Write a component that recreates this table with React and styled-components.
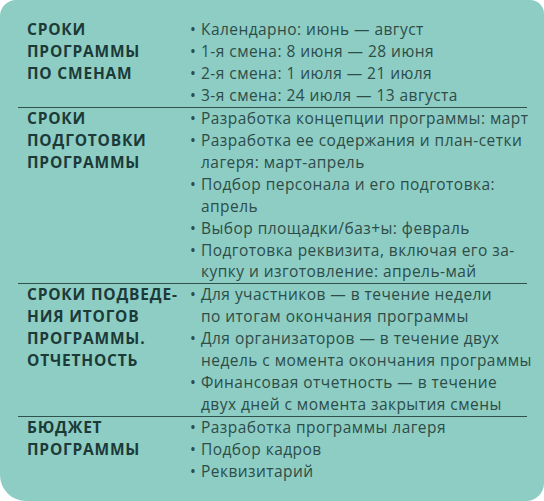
import React from "react";
import styled, { createGlobalStyle } from "styled-components";

const GlobalStyle = createGlobalStyle`
  html, body {
    margin: 0;
    padding: 0;
    background: #ffffff;
  }
`;

const StyledCard = styled.section`
  box-sizing: border-box;
  width: 544px;
  height: 501px;
  background: #8dcdc4;
  border-radius: 16px 14px 18px 26px;
  padding: 19px 17px 0 18px;
  font-family: "Open Sans", "Liberation Sans", sans-serif;
  color: #2e4c48;
`;

const StyledRow = styled.div`
  display: grid;
  grid-template-columns: 172px 1fr;
  border-bottom: ${({ $last }) => ($last ? "none" : "1.5px solid #2f524d")};
`;

const StyledHeading = styled.h3`
  margin: 0;
  padding-left: 9px;
  font-size: 15.5px;
  line-height: 21.95px;
  font-weight: 700;
  letter-spacing: 0.8px;
  text-transform: uppercase;
  color: #1c3a37;
  white-space: nowrap;
`;

const StyledList = styled.ul`
  margin: 0;
  padding: 0;
  list-style: none;
`;

const StyledItem = styled.li`
  font-size: 15.5px;
  line-height: 21.95px;
  letter-spacing: 0.45px;
  white-space: nowrap;
  padding-left: 11px;
  text-indent: -11px;

  &::before {
    content: "•";
    display: inline-block;
    width: 11px;
    text-indent: 0;
    letter-spacing: 0;
  }
`;

const rows = [
  {
    title: ["Сроки", "программы", "по сменам"],
    items: [
      ["Календарно: июнь — август"],
      ["1-я смена: 8 июня — 28 июня"],
      ["2-я смена: 1 июля — 21 июля"],
      ["3-я смена: 24 июля — 13 августа"],
    ],
  },
  {
    title: ["Сроки", "подготовки", "программы"],
    items: [
      ["Разработка концепции программы: март"],
      ["Разработка ее содержания и план-сетки", "лагеря: март-апрель"],
      ["Подбор персонала и его подготовка:", "апрель"],
      ["Выбор площадки/баз+ы: февраль"],
      ["Подготовка реквизита, включая его за-", "купку и изготовление: апрель-май"],
    ],
  },
  {
    title: ["Сроки подведе-", "ния итогов", "программы.", "Отчетность"],
    items: [
      ["Для участников — в течение недели", "по итогам окончания программы"],
      ["Для организаторов — в течение двух", "недель с момента окончания программы"],
      ["Финансовая отчетность — в течение", "двух дней с момента закрытия смены"],
    ],
  },
  {
    title: ["Бюджет", "программы"],
    items: [["Разработка программы лагеря"], ["Подбор кадров"], ["Реквизитарий"]],
  },
];

const withBreaks = (lines) =>
  lines.map((line, i) => (
    <React.Fragment key={i}>
      {i > 0 && <br />}
      {line}
    </React.Fragment>
  ));

const App = () => {
  return (
    <>
      <GlobalStyle />
      <StyledCard>
        {rows.map((row, i) => (
          <StyledRow key={i} $last={i === rows.length - 1}>
            <StyledHeading>{withBreaks(row.title)}</StyledHeading>
            <StyledList>
              {row.items.map((item, j) => (
                <StyledItem key={j}>{withBreaks(item)}</StyledItem>
              ))}
            </StyledList>
          </StyledRow>
        ))}
      </StyledCard>
    </>
  );
};

export default App;
